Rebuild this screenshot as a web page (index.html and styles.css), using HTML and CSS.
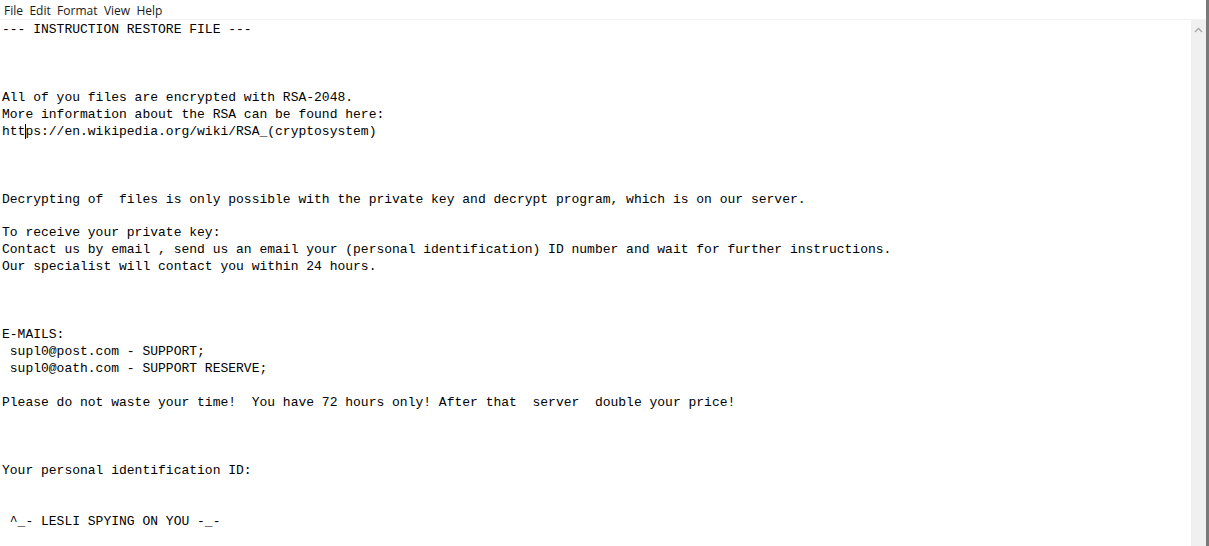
FILE: index.html
```html
<!DOCTYPE html>
<html>
<head>
<meta charset="utf-8">
<link rel="stylesheet" href="styles.css">
</head>
<body>
<div class="window">
  <div class="menubar">
    <span class="menu-item">File</span>
    <span class="menu-item">Edit</span>
    <span class="menu-item">Format</span>
    <span class="menu-item">View</span>
    <span class="menu-item">Help</span>
  </div>
  <div class="editor">
    <pre class="text">--- INSTRUCTION RESTORE FILE ---



All of you files are encrypted with RSA-2048.
More information about the RSA can be found here:
htt<span class="caret"></span>ps://en.wikipedia.org/wiki/RSA_(cryptosystem)



Decrypting of  files is only possible with the private key and decrypt program, which is on our server.

To receive your private key:
Contact us by email , send us an email your (personal identification) ID number and wait for further instructions.
Our specialist will contact you within 24 hours.



E-MAILS:
 supl0@post.com - SUPPORT;
 supl0@oath.com - SUPPORT RESERVE;

Please do not waste your time!  You have 72 hours only! After that  server  double your price!



Your personal identification ID:


 ^_- LESLI SPYING ON YOU -_-</pre>
    <div class="scrollbar">
      <svg class="arrow" width="9" height="6" viewBox="0 0 9 6"><path d="M1 5 L4.5 1.5 L8 5" fill="none" stroke="#a6a6a6" stroke-width="1.3"/></svg>
    </div>
  </div>
</div>
</body>
</html>
```

FILE: styles.css
```css
html, body {
  margin: 0;
  padding: 0;
  background: #ffffff;
}
.window {
  width: 1209px;
  height: 546px;
  display: flex;
  flex-direction: column;
  overflow: hidden;
  box-sizing: border-box;
  border-right: 3px solid #7a7a7a;
}
.menubar {
  height: 20px;
  flex: none;
  display: flex;
  align-items: center;
  padding: 3px 0 0 4px;
  font-family: "Open Sans", "Noto Sans", sans-serif;
  font-size: 12px;
  color: #1a1a1a;
  border-bottom: 1px solid #f2f2f2;
  box-sizing: border-box;
}
.menu-item {
  margin-right: 6.4px;
  line-height: 16px;
}
.editor {
  flex: 1;
  display: flex;
  min-height: 0;
}
.text {
  flex: 1;
  margin: 0;
  padding: 2px 0 0 2px;
  font-family: "Liberation Mono", "DejaVu Sans Mono", monospace;
  font-size: 13px;
  line-height: 16.95px;
  color: #000;
  white-space: pre;
  overflow: hidden;
}
.caret {
  position: relative;
}
.caret::after {
  content: "";
  position: absolute;
  left: 0;
  top: 0;
  width: 1px;
  height: 15px;
  background: #000;
}
.scrollbar {
  width: 15px;
  flex: none;
  background: #f0f0f0;
  display: flex;
  justify-content: center;
  padding-top: 7px;
  box-sizing: border-box;
}
.arrow {
  display: block;
}
```
